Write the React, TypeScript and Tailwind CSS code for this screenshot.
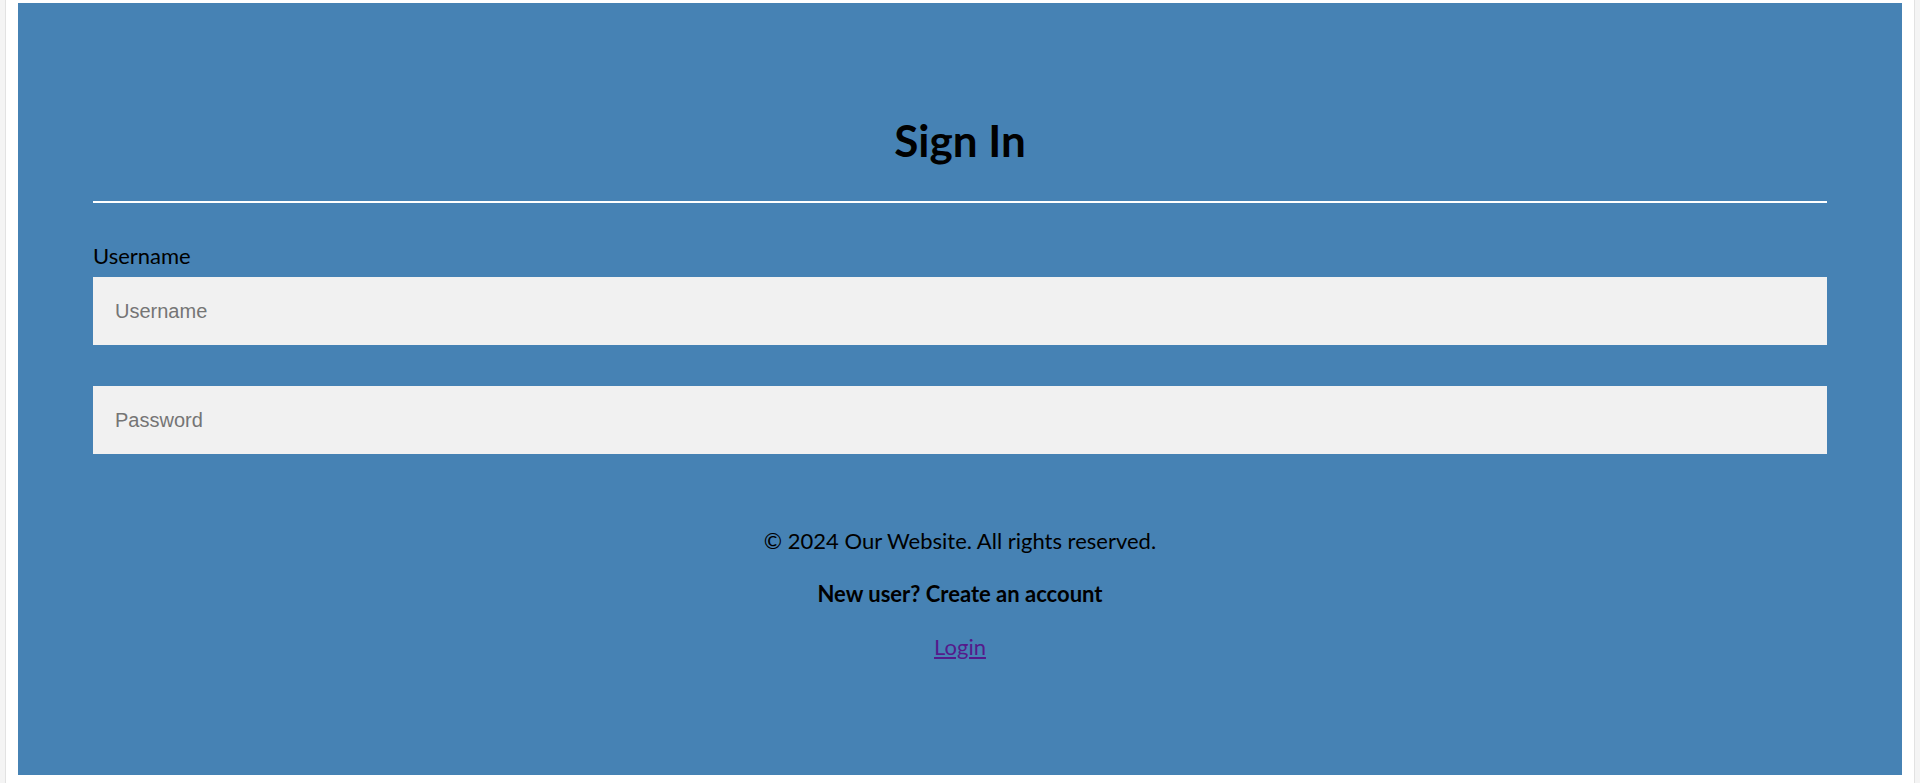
import React from "react";

export default function App() {
  return (
    <div className="w-full h-[783px] bg-[#f4f4f4] px-[5px] overflow-hidden">
      <div className="h-full border-x border-[#e2e2e2] bg-white px-[12px] pt-[3px] pb-[8px]">
        <div
          className="h-full bg-[#4682b4] px-[75px] pt-[111px] flex flex-col text-black"
          style={{ fontFamily: "Lato, 'Open Sans', sans-serif" }}
        >
          <h1 className="text-center font-bold text-[44px] leading-[52px]">Sign In</h1>
          <div className="mt-[35px] h-[2px] bg-white" />
          <label className="mt-[40px] text-[22px] leading-[26px]">Username</label>
          <input
            type="text"
            placeholder="Username"
            className="mt-[8px] h-[68px] w-full bg-[#f1f1f1] pl-[22px] text-[20px] outline-none placeholder:text-[#757575]"
            style={{ fontFamily: "'Liberation Sans', Arial, sans-serif" }}
          />
          <input
            type="password"
            placeholder="Password"
            className="mt-[41px] h-[68px] w-full bg-[#f1f1f1] pl-[22px] text-[20px] outline-none placeholder:text-[#757575]"
            style={{ fontFamily: "'Liberation Sans', Arial, sans-serif" }}
          />
          <p className="mt-[74px] text-center text-[22px] leading-[26px]">© 2024 Our Website. All rights reserved.</p>
          <p className="mt-[27px] text-center text-[22px] leading-[26px] font-bold">New user? Create an account</p>
          <p className="mt-[27px] text-center text-[22px] leading-[26px]">
            <a href="#" className="text-[#551a8b] underline">Login</a>
          </p>
        </div>
      </div>
    </div>
  );
}
